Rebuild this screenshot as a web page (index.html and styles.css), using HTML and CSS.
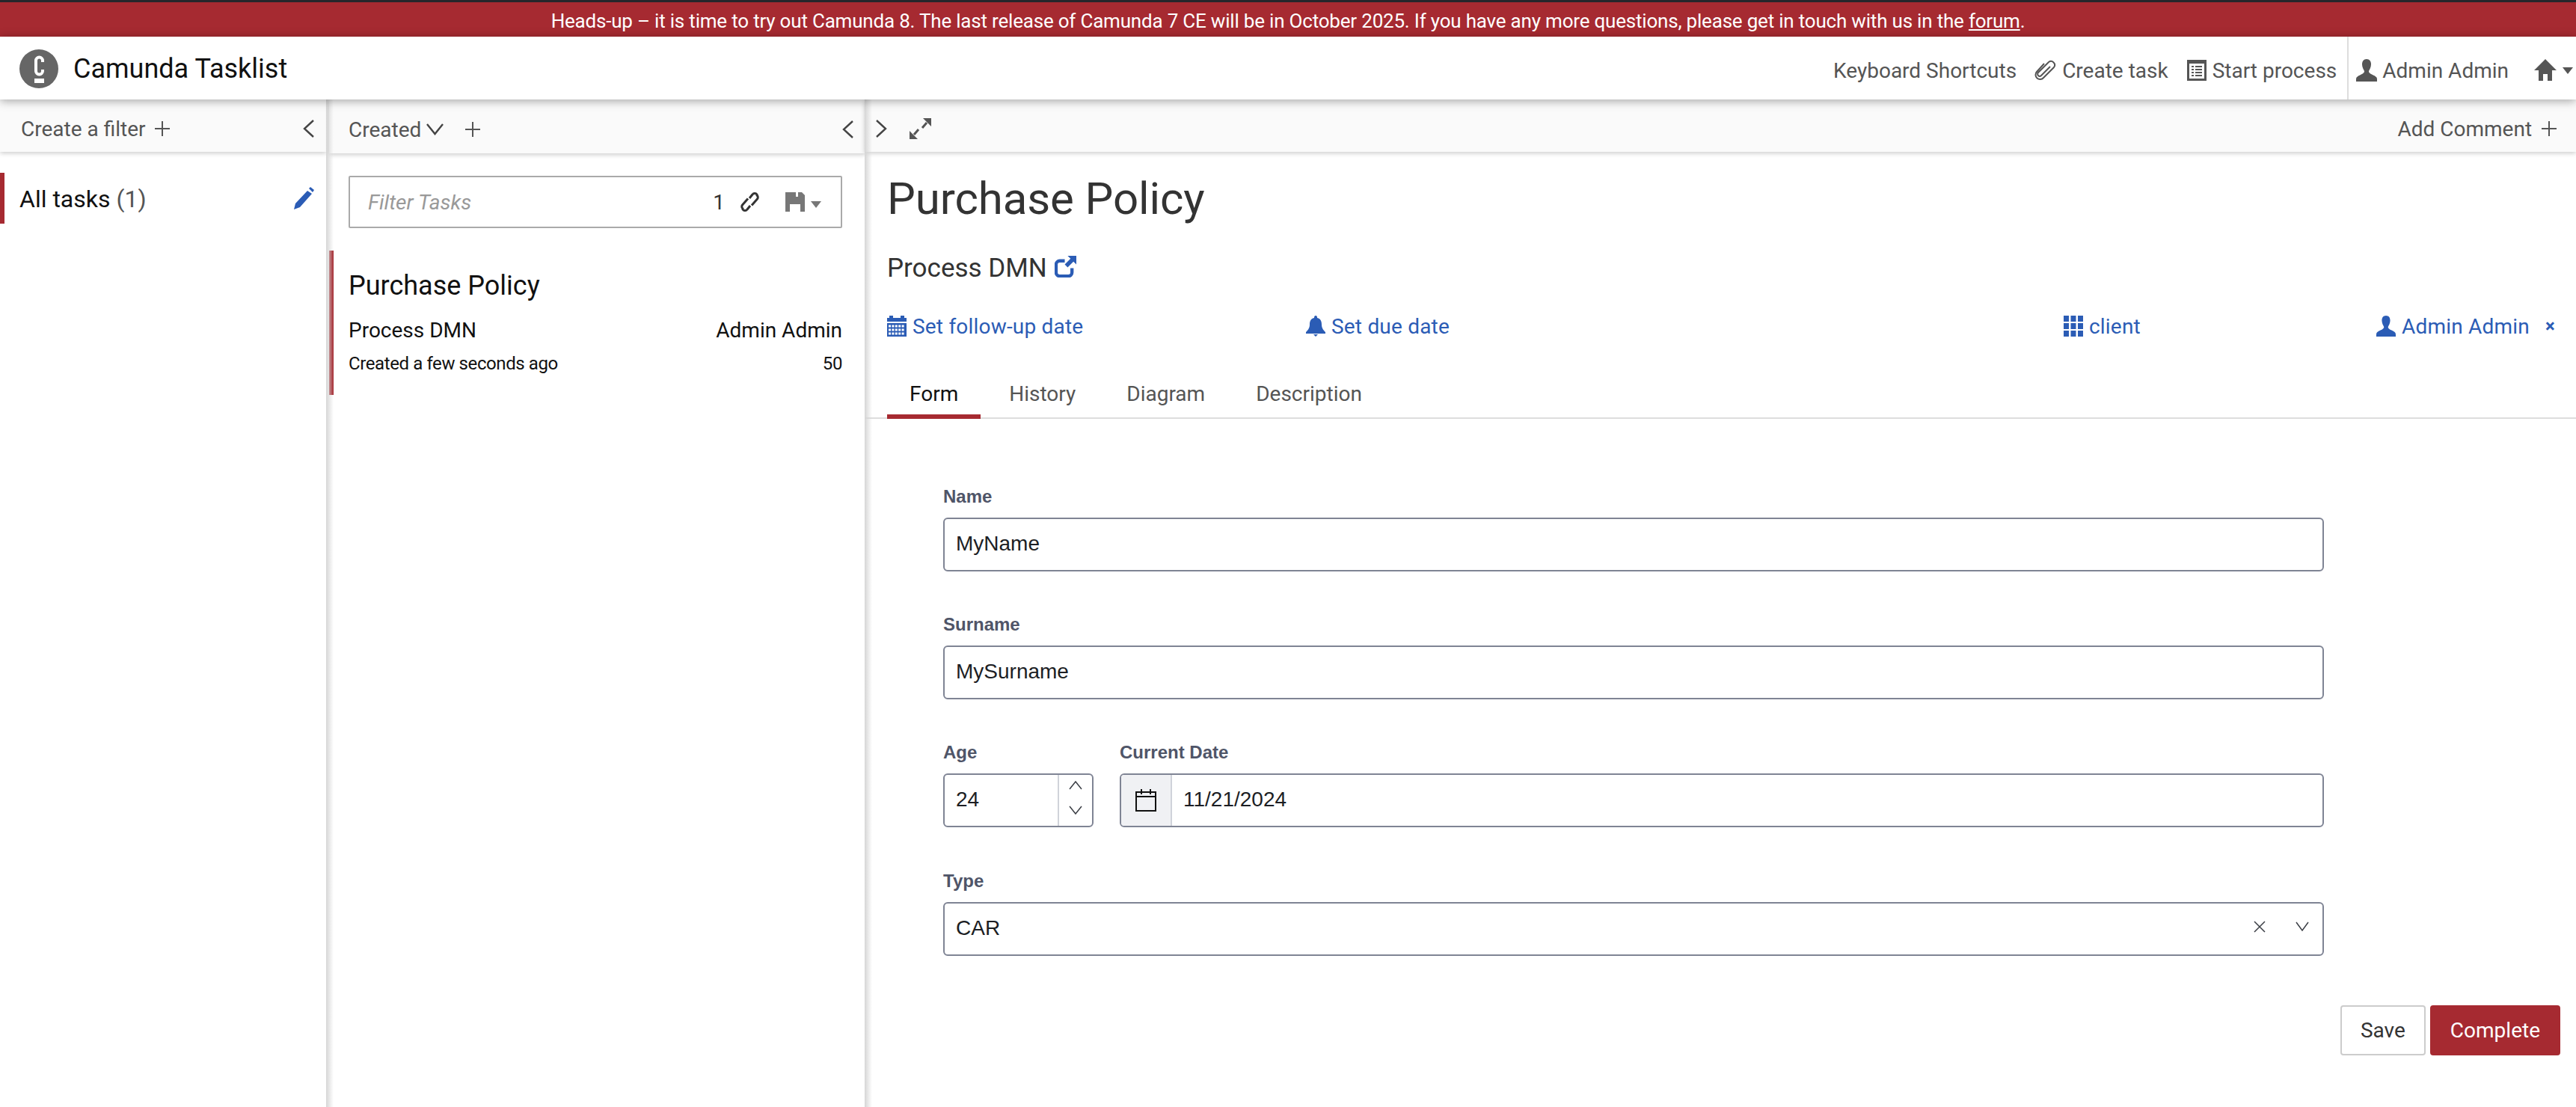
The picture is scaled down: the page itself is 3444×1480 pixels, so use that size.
FILE: index.html
```html
<!DOCTYPE html>
<html lang="en">

<head>
    <meta charset="UTF-8">
    <meta name="viewport" content="width=device-width, initial-scale=1.0">
    <title>Camunda Tasklist</title>
    <link rel="stylesheet" href="styles.css">
</head>

<body>
    <div class="banner">Heads-up – it is time to try out Camunda 8. The last release of Camunda 7 CE will be in October 2025. If you have any more questions, please get in touch with us in the <a href="#">forum</a>.</div>

    <header class="topbar">
        <div class="brand">
            <svg class="logo" viewBox="0 0 52 52"><circle cx="26" cy="26" r="26" fill="#666"/><path d="M31 17v-2a4.500 4.500 0 0 0-9 0v14a4.500 4.500 0 0 0 9 0v-2" fill="none" stroke="#fff" stroke-width="4"/><rect x="20" y="39" width="13" height="6" fill="#fff"/></svg>
            <span>Camunda Tasklist</span>
        </div>
        <nav class="topnav">
            <a class="nav-shortcuts" href="#">Keyboard Shortcuts</a>
            <a class="nav-task" href="#">
                <svg class="ico-clip" viewBox="0 0 30 28"><path d="M21 9L9 21a2.800 2.800 0 0 1-4-4L19 3a5 5 0 0 1 7 7L12 24a6 6 0 0 1-9-8L13 5" fill="none" stroke="#555" stroke-width="2"/></svg>
                Create task</a>
            <a class="nav-process" href="#">
                <svg class="ico-doc" viewBox="0 0 26 28"><path fill-rule="evenodd" d="M0 0h26v28H0zM3 5v20h20V5z" fill="#555"/><path d="M6 8h3v2H6zm5 0h9v2h-9zM6 12h3v2H6zm5 0h9v2h-9zM6 16h3v2H6zm5 0h9v2h-9zM6 20h3v2H6zm5 0h9v2h-9z" fill="#555"/></svg>
                Start process</a>
            <div class="nav-user">
                <a href="#">
                    <svg class="ico-user" viewBox="0 0 28 30"><path d="M14 0c4 0 6 3 6 7 0 4-2 7-3 9 0 2 1 3 5 5 4 2 6 3 6 6v3H0v-3c0-3 2-4 6-6 4-2 5-3 5-5-1-2-3-5-3-9 0-4 2-7 6-7z" fill="#555"/></svg>
                    Admin Admin</a>
                <a class="nav-home" href="#">
                    <svg class="ico-home" viewBox="0 0 30 30"><path d="M15 0l15 15h-6v14h-6v-9h-6v9H6V15H0z" fill="#555"/></svg>
                    <i class="caret"></i></a>
            </div>
        </nav>
    </header>

    <main class="columns">
        <section class="col col-filters">
            <div class="toolbar">
                <span class="tool-label">Create a filter <svg class="plus" viewBox="0 0 20 20"><path d="M10 0v20M0 10h20" stroke="#555" stroke-width="2"/></svg></span>
                <svg class="chev" viewBox="0 0 17 24"><path d="M15 1L3 12l12 11" fill="none" stroke="#444" stroke-width="2.400"/></svg>
            </div>
            <div class="filter-row">
                <span class="filter-name">All tasks <em>(1)</em></span>
                <svg class="ico-pencil" viewBox="0 0 28 30"><path d="M19 5l6 4L9 27l-8 3 2-8zM21 2l2-2 5 4-2 3z" fill="#2b5cb5"/></svg>
            </div>
        </section>

        <section class="col col-list">
            <div class="toolbar">
                <span class="tool-label">Created<svg class="sort-chev" viewBox="0 0 25 16"><path d="M2 1l10.500 13L23 1" fill="none" stroke="#444" stroke-width="2.400"/></svg><svg class="plus" viewBox="0 0 20 20"><path d="M10 0v20M0 10h20" stroke="#555" stroke-width="2"/></svg></span>
                <svg class="chev" viewBox="0 0 17 24"><path d="M15 1L3 12l12 11" fill="none" stroke="#444" stroke-width="2.400"/></svg>
            </div>
            <div class="search">
                <span class="search-hint">Filter Tasks</span>
                <span class="search-count">1</span>
                <svg class="ico-link" viewBox="0 0 27 28"><path d="M13 9l4-5a3.600 3.600 0 0 1 6 0v1a3.600 3.600 0 0 1 0 5.500l-7 8" fill="none" stroke="#333" stroke-width="3"/><path d="M14 19l-4 5a3.600 3.600 0 0 1-6 0v-1a3.600 3.600 0 0 1 0-5.500l7-8" fill="none" stroke="#333" stroke-width="3"/></svg>
                <svg class="ico-save" viewBox="0 0 26 26"><path fill-rule="evenodd" d="M0 0h22l4 4v22H0zM14 0v6h3V0zM6 16v10h14V16z" fill="#777"/></svg>
                <i class="caret caret-save"></i>
            </div>
            <article class="task">
                <h3>Purchase Policy</h3>
                <div class="task-line"><span>Process DMN</span><span>Admin Admin</span></div>
                <div class="task-meta"><span>Created a few seconds ago</span><span>50</span></div>
            </article>
        </section>

        <section class="col col-detail">
            <div class="toolbar">
                <span class="detail-tools">
                    <svg class="chev" viewBox="0 0 17 24"><path d="M2 1l12 11L2 23" fill="none" stroke="#444" stroke-width="2.400"/></svg>
                    <svg class="ico-expand" viewBox="0 0 29 28"><path d="M18 0h11v11zM11 28H0V17z" fill="#555"/><path d="M23 6l-6 7M6 22l6-7" stroke="#555" stroke-width="3"/></svg>
                </span>
                <span class="tool-label">Add Comment <svg class="plus" viewBox="0 0 20 20"><path d="M10 0v20M0 10h20" stroke="#555" stroke-width="2"/></svg></span>
            </div>
            <div class="detail-body">
                <h1>Purchase Policy</h1>
                <h2>Process DMN <svg class="ico-open" viewBox="0 0 30 30"><path d="M14 7H7a5 5 0 0 0-5 5v11a5 5 0 0 0 5 5h12a5 5 0 0 0 5-5v-6" fill="none" stroke="#2b5cb5" stroke-width="4.500"/><path d="M18 0h12v12l-4-4-8 8-4-4 8-8z" fill="#2b5cb5"/></svg></h2>
                <div class="meta-links">
                    <a class="meta-follow" href="#"><svg class="ico" viewBox="0 0 26 28"><path d="M3 0h5v3h10V0h5v3h3v5H0V3h3zM0 10h26v18H0z" fill="#2b5cb5"/><path d="M2 14h22M2 19h22M2 24h22" stroke="#fff" stroke-width="3" stroke-dasharray="3 1.400"/></svg> Set follow-up date</a>
                    <a class="meta-due" href="#"><svg class="ico" viewBox="0 0 26 28"><path d="M13 0c2 0 2 2 2 3 5 1 6 5 6 9 0 5 3 8 5 10v2H0v-2c2-2 5-5 5-10 0-4 1-8 6-9 0-1 0-3 2-3zM10 25h6l-3 3z" fill="#2b5cb5"/></svg> Set due date</a>
                    <a class="meta-group" href="#"><svg class="ico" viewBox="0 0 26 28"><path d="M0 0h7v8H0zm9.500 0h7v8h-7zM19 0h7v8h-7zM0 10h7v8H0zm9.500 0h7v8h-7zM19 10h7v8h-7zM0 20h7v8H0zm9.500 0h7v8h-7zM19 20h7v8h-7z" fill="#2b5cb5"/></svg> client</a>
                    <a class="meta-user" href="#"><svg class="ico" viewBox="0 0 28 30"><path d="M14 0c4 0 6 3 6 7 0 4-2 7-3 9 0 2 1 3 5 5 4 2 6 3 6 6v3H0v-3c0-3 2-4 6-6 4-2 5-3 5-5-1-2-3-5-3-9 0-4 2-7 6-7z" fill="#2b5cb5"/></svg> Admin Admin</a>
                    <a class="meta-remove" href="#">×</a>
                </div>
                <div class="tabs">
                    <a class="tab active" href="#">Form</a>
                    <a class="tab" href="#">History</a>
                    <a class="tab" href="#">Diagram</a>
                    <a class="tab" href="#">Description</a>
                </div>
                <form class="form">
                    <div class="field">
                        <label>Name</label>
                        <div class="input"><span class="value">MyName</span></div>
                    </div>
                    <div class="field">
                        <label>Surname</label>
                        <div class="input"><span class="value">MySurname</span></div>
                    </div>
                    <div class="field-row">
                        <div class="field field-age">
                            <label>Age</label>
                            <div class="input">
                                <span class="value">24</span>
                                <div class="spinner">
                                    <svg viewBox="0 0 18 16"><path d="M1 13L9 3l8 10" fill="none" stroke="#3c3f46" stroke-width="1.500"/></svg>
                                    <svg viewBox="0 0 18 16"><path d="M1 3l8 10 8-10" fill="none" stroke="#3c3f46" stroke-width="1.500"/></svg>
                                </div>
                            </div>
                        </div>
                        <div class="field field-date">
                            <label>Current Date</label>
                            <div class="input">
                                <div class="adorner"><svg viewBox="0 0 28 30"><path d="M1 4h26v25H1zM1 10h26M8 0v7M20 0v7" fill="none" stroke="#111" stroke-width="2"/></svg></div>
                                <span class="value">11/21/2024</span>
                            </div>
                        </div>
                    </div>
                    <div class="field">
                        <label>Type</label>
                        <div class="input">
                            <span class="value">CAR</span>
                            <svg class="sel-clear" viewBox="0 0 16 16"><path d="M1 1l14 14M15 1L1 15" fill="none" stroke="#3c3f46" stroke-width="1.500"/></svg>
                            <svg class="sel-open" viewBox="0 0 18 14"><path d="M1 1l8 11 8-11" fill="none" stroke="#3c3f46" stroke-width="1.500"/></svg>
                        </div>
                    </div>
                </form>
                <div class="actions">
                    <button class="btn" type="button">Save</button>
                    <button class="btn btn-primary" type="button">Complete</button>
                </div>
            </div>
        </section>
    </main>
</body>

</html>
```

FILE: styles.css
```css
* {
    margin: 0;
    padding: 0;
    box-sizing: border-box;
}

html,
body {
    height: 100%;
    overflow: hidden;
}

body {
    display: flex;
    flex-direction: column;
    font-family: Roboto, "Liberation Sans", sans-serif;
    font-size: 28px;
    color: #333;
    background-color: #fff;
}

a {
    color: inherit;
    text-decoration: none;
}

.banner {
    height: 49px;
    padding-top: 5px;
    border-top: 3px solid #26262b;
    background-color: #a62a31;
    color: #fff;
    font-size: 26px;
    letter-spacing: -.2px;
    line-height: 41px;
    text-align: center;
}

.banner a {
    text-decoration: underline;
}

.topbar {
    height: 84px;
    flex: none;
    display: flex;
    justify-content: space-between;
    position: relative;
    z-index: 3;
    background-color: #fff;
    box-shadow: 0 2px 12px rgba(0, 0, 0, .35);
}

.brand {
    display: flex;
    align-items: center;
    padding-left: 26px;
    padding-top: 1px;
    font-size: 36px;
    color: #111;
}

.logo {
    width: 52px;
    height: 52px;
    margin-right: 20px;
}

.topnav {
    display: flex;
    align-items: center;
    color: #555;
}

.topnav a {
    display: flex;
    align-items: center;
    padding-top: 6px;
}

.nav-task {
    margin-left: 24px;
}

.nav-process {
    margin-left: 25px;
}

.ico-clip {
    width: 30px;
    height: 28px;
    margin-right: 7px;
}

.ico-doc {
    width: 26px;
    height: 28px;
    margin-right: 8px;
}

.nav-user {
    height: 100%;
    display: flex;
    align-items: center;
    margin-left: 14px;
    padding-left: 10px;
    border-left: 2px solid #ddd;
}

.ico-user {
    width: 28px;
    height: 30px;
    margin-right: 7px;
}

.nav-home {
    margin-left: 34px;
    margin-right: 4px;
}

.ico-home {
    width: 30px;
    height: 30px;
    margin-right: 8px;
}

.caret {
    display: inline-block;
    border-top: 9px solid #555;
    border-left: 7.500px solid transparent;
    border-right: 7.500px solid transparent;
}

.columns {
    flex: 1;
    display: grid;
    grid-template-columns: 436px 720px 1fr;
    min-height: 0;
}

.col {
    min-width: 0;
    position: relative;
}

/* soft gutter on the left edge of the two inner columns */
.col-list::before,
.col-detail::before {
    content: "";
    position: absolute;
    top: 0;
    bottom: 0;
    left: 0;
    z-index: 2;
    width: 10px;
    background: linear-gradient(to right, #d6d6d6, rgba(255, 255, 255, 0));
}

.col-list {
    padding-left: 4px;
}

.toolbar {
    height: 70px;
    display: flex;
    align-items: center;
    justify-content: space-between;
    padding: 8px 15px 0 28px;
    background-color: #fafafa;
    color: #555;
    box-shadow: 0 2px 6px rgba(0, 0, 0, .2);
}

.tool-label {
    display: flex;
    align-items: center;
    white-space: pre;
}

.plus {
    width: 20px;
    height: 20px;
    margin-left: 6px;
}

.chev {
    width: 17px;
    height: 24px;
}

.filter-row {
    height: 68px;
    display: flex;
    align-items: center;
    justify-content: space-between;
    margin-top: 28px;
    padding: 0 16px 0 20px;
    border-left: 6px solid #a62a31;
    font-size: 32px;
    color: #111;
}

.filter-name {
    padding-top: 2px;
}

.filter-name em {
    font-style: normal;
    color: #555;
}

.ico-pencil {
    width: 28px;
    height: 30px;
}

.col-list .toolbar {
    height: 72px;
    padding-left: 26px;
    padding-right: 14px;
}

.sort-chev {
    width: 25px;
    height: 16px;
    margin: 0 22px 0 6px;
}

.search {
    height: 70px;
    display: flex;
    align-items: center;
    margin: 30px 30px 30px 26px;
    padding: 0 26px 0 24px;
    border: 2px solid #aaa;
    border-radius: 2px;
}

.search-hint {
    flex: 1;
    font-style: italic;
    color: #999;
}

.search-count {
    color: #333;
}

.ico-link {
    width: 27px;
    height: 28px;
    margin: 0 34px 0 20px;
}

.ico-save {
    width: 26px;
    height: 26px;
    margin-right: 8px;
}

.caret-save {
    margin-top: 6px;
    border-top-color: #777;
}

.task {
    height: 193px;
    padding: 24px 30px 0 20px;
    border-left: 6px solid #a62a31;
    color: #111;
}

.task h3 {
    font-size: 36px;
    font-weight: 400;
    line-height: 46px;
}

.task-line,
.task-meta {
    display: flex;
    justify-content: space-between;
}

.task-line {
    margin-top: 19px;
    line-height: 36px;
}

.task-meta {
    margin-top: 10px;
    font-size: 24px;
    letter-spacing: -.4px;
    line-height: 32px;
}

.col-detail .toolbar {
    padding: 8px 26px 0 14px;
}

.detail-tools {
    display: flex;
    align-items: center;
}

.ico-expand {
    width: 29px;
    height: 28px;
    margin-left: 29px;
}

.detail-body {
    padding-top: 26px;
}

h1 {
    margin-left: 30px;
    font-size: 60px;
    font-weight: 400;
    letter-spacing: -.1px;
    line-height: 74px;
}

h2 {
    display: flex;
    align-items: center;
    gap: 10px;
    margin: 35px 0 0 30px;
    font-size: 35px;
    font-weight: 400;
    line-height: 42px;
}

.ico-open {
    width: 29px;
    height: 29px;
    margin-bottom: 6px;
}

.meta-links {
    display: flex;
    align-items: center;
    height: 40px;
    margin-top: 36px;
    padding-left: 30px;
    color: #2b5cb5;
    letter-spacing: .2px;
}

.meta-links a {
    display: flex;
    align-items: center;
}

.ico {
    width: 26px;
    height: 28px;
    margin-right: 8px;
}

.meta-follow {
    width: 560px;
}

.meta-due {
    width: 1013px;
}

.meta-group {
    width: 418px;
}

.meta-user {
    width: 226px;
}

.meta-remove {
    font-size: 24px;
    font-weight: 700;
}

.tabs {
    height: 84px;
    display: flex;
    gap: 8px;
    margin-top: 20px;
    padding: 0 0 0 30px;
    border-bottom: 2px solid #ddd;
}

.tab {
    height: 84px;
    padding: 34px 30px 0;
    color: #555;
}

.tab.active {
    color: #111;
    border-bottom: 6px solid #a62a31;
}

.form {
    width: 1846px;
    margin: 90px 0 0 105px;
    font-family: "Liberation Sans", Arial, sans-serif;
}

.field {
    margin-bottom: 57px;
}

.field-row {
    display: flex;
    gap: 35px;
    margin-bottom: 58px;
}

.field-row .field {
    margin-bottom: 0;
}

.field-age {
    width: 201px;
}

.field-date {
    flex: 1;
}

label {
    display: block;
    height: 42px;
    font-size: 24px;
    font-weight: 700;
    line-height: 28px;
    color: #4f5568;
}

.input {
    height: 72px;
    display: flex;
    align-items: center;
    border: 2px solid #7f8494;
    border-radius: 6px;
    font-size: 28px;
    color: #1c1e24;
    overflow: hidden;
}

.value {
    flex: 1;
    padding: 0 0 2px 15px;
}

.spinner {
    width: 46px;
    height: 100%;
    display: flex;
    flex-direction: column;
    align-items: center;
    gap: 17px;
    padding-top: 6px;
    border-left: 2px solid #d0d3da;
}

.spinner svg {
    width: 18px;
    height: 16px;
}

.adorner {
    width: 68px;
    height: 100%;
    display: flex;
    align-items: center;
    justify-content: center;
    background-color: #f0f1f4;
    border-right: 2px solid #d0d3da;
}

.adorner svg {
    width: 28px;
    height: 30px;
}

.sel-clear {
    width: 16px;
    height: 16px;
    margin: 0 40px 6px 0;
}

.sel-open {
    width: 18px;
    height: 14px;
    margin: 0 18px 6px 0;
}

.actions {
    display: flex;
    justify-content: flex-end;
    gap: 6px;
    margin: 66px 21px 0 0;
}

.btn {
    height: 67px;
    padding: 0 25px;
    border: 2px solid #ccc;
    border-radius: 4px;
    background-color: #fff;
    color: #333;
    font-family: inherit;
    font-size: 28px;
}

.btn-primary {
    border-color: #a62a31;
    background-color: #a62a31;
    color: #fff;
}
```
